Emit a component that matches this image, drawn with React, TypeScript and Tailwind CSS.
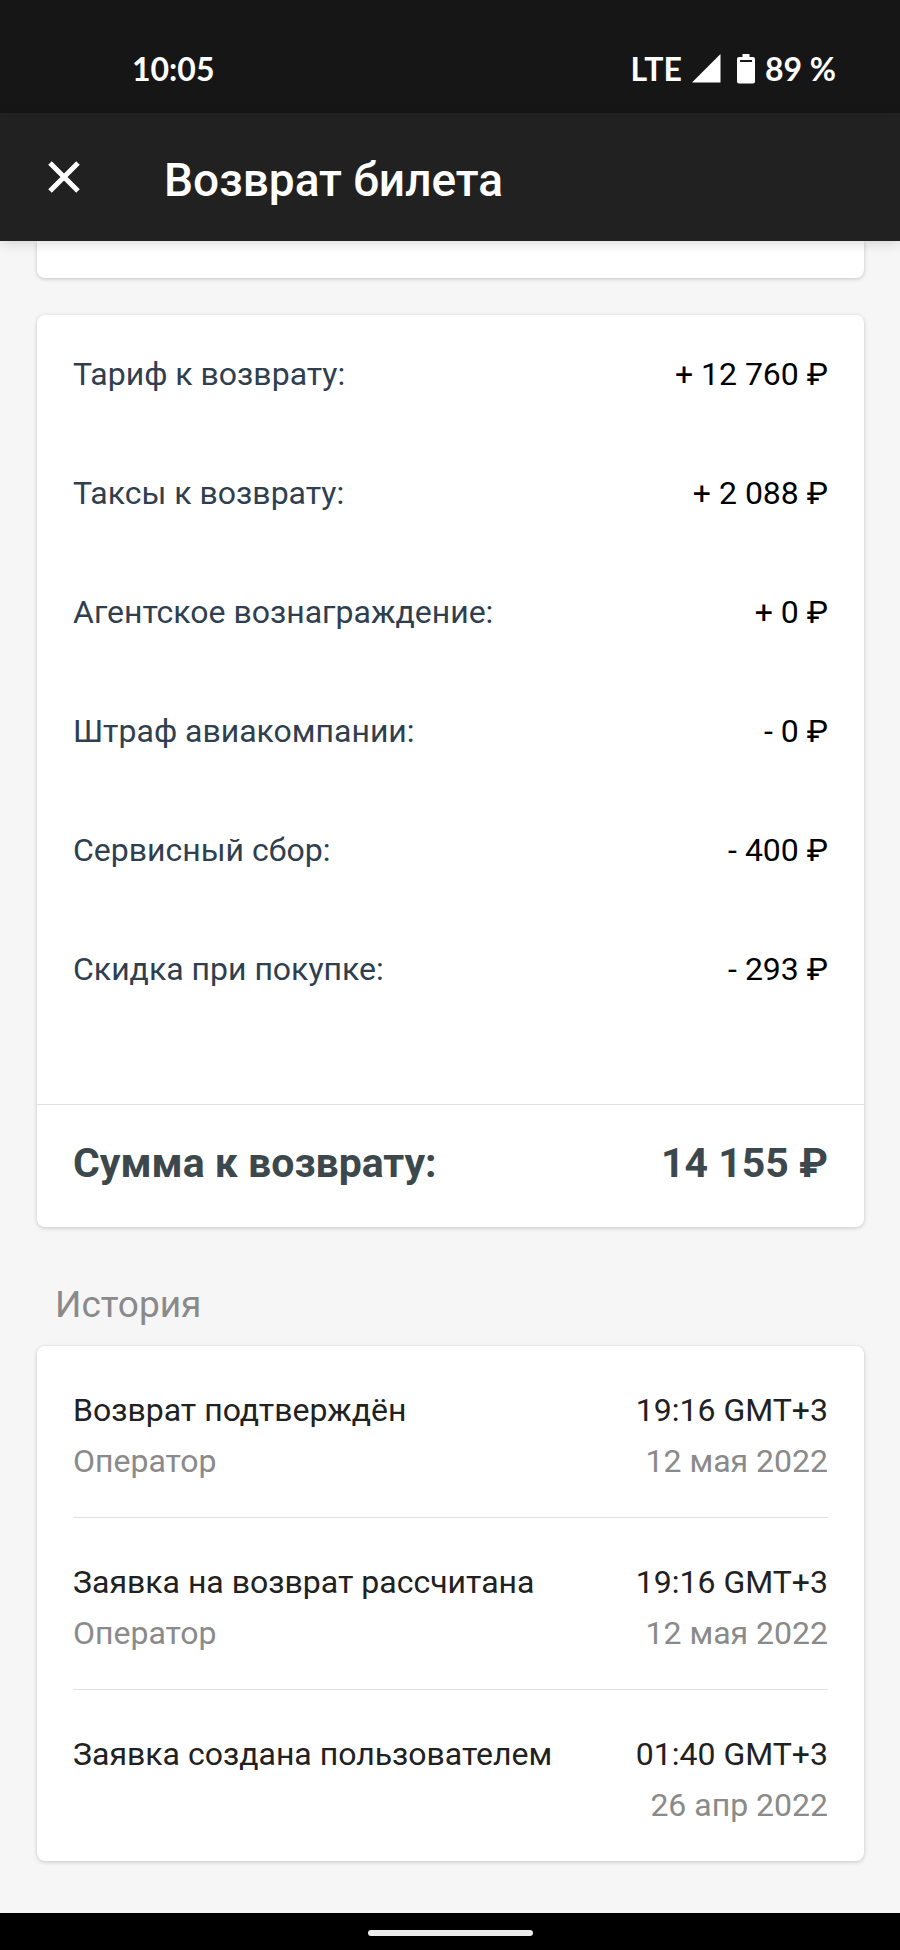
import React from 'react';

type Fee = { label: string; value: string };
type HistoryItem = { title: string; author?: string; time: string; date: string };

const fees: Fee[] = [
  { label: 'Тариф к возврату:', value: '+ 12 760 ₽' },
  { label: 'Таксы к возврату:', value: '+ 2 088 ₽' },
  { label: 'Агентское вознаграждение:', value: '+ 0 ₽' },
  { label: 'Штраф авиакомпании:', value: '- 0 ₽' },
  { label: 'Сервисный сбор:', value: '- 400 ₽' },
  { label: 'Скидка при покупке:', value: '- 293 ₽' },
];

const historyItems: HistoryItem[] = [
  { title: 'Возврат подтверждён', author: 'Оператор', time: '19:16 GMT+3', date: '12 мая 2022' },
  { title: 'Заявка на возврат рассчитана', author: 'Оператор', time: '19:16 GMT+3', date: '12 мая 2022' },
  { title: 'Заявка создана пользователем', time: '01:40 GMT+3', date: '26 апр 2022' },
];

const StatusBar = () => (
  <div className="flex h-[113px] items-center justify-between bg-[#161616] pl-[132px] pr-[64px] pt-[24px] font-['Lato',sans-serif] text-[32px] font-bold leading-[40px] text-white">
    <span>10:05</span>
    <div className="flex items-center">
      <span>LTE</span>
      <svg className="ml-[10px] h-[29px] w-[29px]" viewBox="0 0 29 29" fill="currentColor" aria-hidden="true">
        <path d="M0 28.500 28.500 0V28.500Z" />
      </svg>
      <svg className="ml-[16px] h-[30px] w-[18px]" viewBox="0 0 18 30" fill="currentColor" aria-hidden="true">
        <path
          fillRule="evenodd"
          d="M5.500 0h7v3H16a2 2 0 0 1 2 2v22.500a2 2 0 0 1-2 2H2a2 2 0 0 1-2-2V5a2 2 0 0 1 2-2h3.500zM3 6v2h12V6z"
        />
      </svg>
      <span className="ml-[10px]">89 %</span>
    </div>
  </div>
);

const Header = () => (
  <header className="relative flex h-[128px] items-center bg-[#212121] px-12 text-white shadow-[0_2px_12px_rgba(0,0,0,0.15)]">
    <button type="button" aria-label="Закрыть" className="h-8 w-8">
      <svg viewBox="0 0 32 32" fill="none" stroke="currentColor" strokeWidth="5" aria-hidden="true">
        <path d="M2 2l28 28M30 2L2 30" />
      </svg>
    </button>
    <h1 className="ml-[84px] pt-[6px] text-[46px] font-medium leading-[56px]">Возврат билета</h1>
  </header>
);

const RefundPage = () => {
  return (
    <div className="flex min-h-screen flex-col bg-[#f6f6f6] font-['Roboto',sans-serif] text-[32px] text-[#212121]">
      <StatusBar />
      <Header />

      <main className="flex-1 pb-[52px] pl-[37px] pr-9">
        {/* Tail of the previous card, scrolled under the header */}
        <div className="h-[37px] rounded-b-lg bg-white shadow-[0_1px_4px_rgba(0,0,0,0.2)]" />

        {/* Refund calculation */}
        <section className="mt-[37px] rounded-lg bg-white shadow-[0_1px_4px_rgba(0,0,0,0.2)]">
          <dl>
            <div className="px-9 pb-[75px]">
              {fees.map((fee) => (
                <div key={fee.label} className="flex h-[119px] items-center justify-between pb-[2px]">
                  <dt className="text-[#2f3f4f]">{fee.label}</dt>
                  <dd className="text-black">{fee.value}</dd>
                </div>
              ))}
            </div>
            <div className="flex h-[123px] items-center justify-between border-t border-[#e2e2e2] px-9 pb-1 text-[41px] font-bold text-[#3c484b]">
              <dt>Сумма к возврату:</dt>
              <dd>14 155 ₽</dd>
            </div>
          </dl>
        </section>

        <h2 className="px-[18px] pt-9 text-[37px] leading-[83px] text-[#8a8a8a]">История</h2>

        {/* History */}
        <ul className="rounded-lg bg-white px-9 shadow-[0_1px_4px_rgba(0,0,0,0.2)]">
          {historyItems.map((item) => (
            <li
              key={item.title}
              className="flex justify-between border-b border-[#e2e2e2] pb-[30px] pt-[39px] leading-[51px] last:border-b-0"
            >
              <div>
                <p>{item.title}</p>
                {item.author && <p className="text-[#8a8a8a]">{item.author}</p>}
              </div>
              <div className="text-right">
                <p>{item.time}</p>
                <p className="text-[#8a8a8a]">{item.date}</p>
              </div>
            </li>
          ))}
        </ul>
      </main>

      {/* Gesture bar */}
      <footer className="flex h-[37px] items-center justify-center bg-black pt-[3px]">
        <div className="h-[6px] w-[165px] rounded-full bg-[#ececec]" />
      </footer>
    </div>
  );
};

export default RefundPage;
